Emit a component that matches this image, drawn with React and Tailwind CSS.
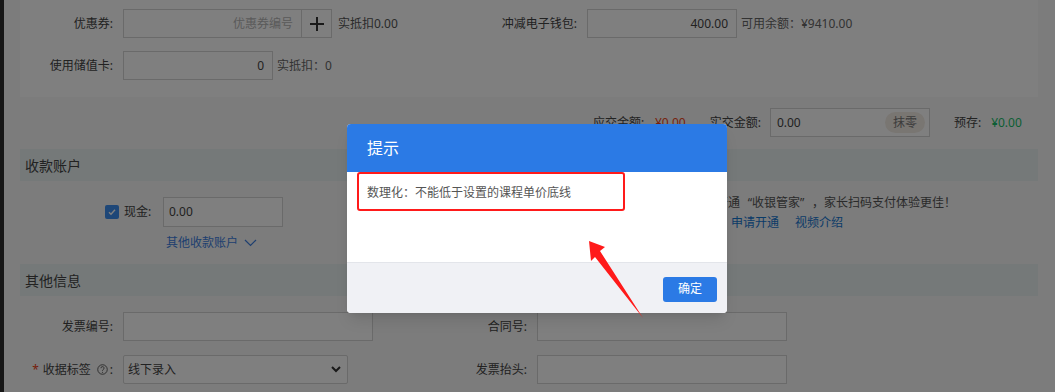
import React from "react";

function Label({ children, className = "" }) {
  return (
    <span className={`shrink-0 text-right text-[12px] text-[#444] ${className}`}>
      {children}
    </span>
  );
}

function Box({ className = "", children }) {
  return (
    <div
      className={`flex h-[29px] items-center border border-[#d4d4d4] bg-white px-[8px] text-[12px] text-[#444] ${className}`}
    >
      {children}
    </div>
  );
}

export default function App() {
  return (
    <div className="relative h-[392px] w-[1055px] overflow-hidden bg-[#f8f8f8] font-[Noto_Sans,Noto_Sans_CJK_SC,sans-serif]">
      <div className="flex h-full">
        <div className="w-[4px] shrink-0 bg-[#2c2c2c]" />
        <div className="flex-1 pl-[16px] pr-[17px]">
          {/* top panel */}
          <div className="h-[97px] bg-white pt-[9px]">
            <div className="flex h-[29px] items-center">
              <div className="flex w-[440px] items-center">
                <Label className="w-[93px]">优惠券:</Label>
                <Box className="ml-[10px] w-[179px] justify-end text-[#b5b5b5]">优惠券编号</Box>
                <div className="flex h-[29px] w-[30px] items-center justify-center border border-l-0 border-[#d4d4d4]">
                  <svg width="16" height="16" viewBox="0 0 16 16">
                    <path d="M8 1v14M1 8h14" stroke="#333" strokeWidth="2" />
                  </svg>
                </div>
                <span className="ml-[6px] text-[12px] text-[#555]">实抵扣0.00</span>
              </div>
              <Label className="w-[117px]">冲减电子钱包:</Label>
              <Box className="ml-[10px] w-[150px] justify-end">400.00</Box>
              <span className="ml-[4px] text-[12px] text-[#666]">可用余额：¥9410.00</span>
            </div>
            <div className="mt-[13px] flex h-[29px] items-center">
              <Label className="w-[93px]">使用储值卡:</Label>
              <Box className="ml-[10px] w-[150px] justify-end">0</Box>
              <span className="ml-[4px] text-[12px] text-[#666]">实抵扣：0</span>
            </div>
          </div>

          {/* totals */}
          <div className="mt-[11px] flex h-[29px] items-center pl-[573px] text-[12px] text-[#444]">
            <span className="w-[62px]">应交金额:</span>
            <span className="text-[#ed3f14]">¥0.00</span>
            <span className="ml-[24px]">实交金额:</span>
            <div className="ml-[9px] flex h-[29px] w-[160px] items-center justify-between border border-[#d4d4d4] bg-white pl-[6px] pr-[4px]">
              <span>0.00</span>
              <span className="flex h-[21px] w-[40px] items-center justify-center rounded-full bg-[#f3ece4] text-[#777]">
                抹零
              </span>
            </div>
            <span className="ml-[24px]">预存:</span>
            <span className="ml-[10px] text-[#19be6b]">¥0.00</span>
          </div>

          {/* 收款账户 */}
          <div className="mt-[12px] flex h-[32px] items-center bg-[#eaf3f3] pl-[5px] text-[14px] text-[#444]">
            收款账户
          </div>
          <div className="flex pt-[16px]">
            <div className="w-[660px] pl-[85px]">
              <div className="flex h-[30px] items-center">
                <span className="flex h-[14px] w-[14px] items-center justify-center rounded-[2px] bg-[#3d8ef0]">
                  <svg width="10" height="10" viewBox="0 0 10 10">
                    <path d="M2 5.2l2 2 4-4.4" fill="none" stroke="#fff" strokeWidth="1.4" />
                  </svg>
                </span>
                <span className="ml-[5px] w-[39px] text-[12px] text-[#444]">现金:</span>
                <div className="flex h-[30px] w-[120px] items-center border border-[#d4d4d4] bg-white pl-[5px] text-[12px] text-[#444]">
                  0.00
                </div>
              </div>
              <div className="mt-[7px] flex items-center pl-[61px] text-[12px] text-[#3d7fe0]">
                其他收款账户
                <svg className="ml-[6px]" width="13" height="8" viewBox="0 0 13 8">
                  <path d="M1 1l5.5 5.5L12 1" fill="none" stroke="#3d7fe0" strokeWidth="1.2" />
                </svg>
              </div>
            </div>
            <div className="text-[12px] leading-[20px] text-[#555]">
              <div className="-mt-[4px] flex">
                <span>您还未开通</span>
                <span className="inline-block w-[12px] text-right">“</span>
                <span>收银管家</span>
                <span className="inline-block w-[12px]">”</span>
                <span className="inline-block w-[12px]">，</span>
                <span>家长扫码支付体验更佳！</span>
              </div>
              <div className="flex">
                <span className="inline-block w-[51px]">请点击</span>
                <span className="text-[#1577d1]">申请开通</span>
                <span className="ml-[16px] text-[#1577d1]">视频介绍</span>
              </div>
            </div>
          </div>

          {/* 其他信息 */}
          <div className="mt-[12px] flex h-[32px] items-center bg-[#eaf3f3] pl-[5px] text-[14px] text-[#444]">
            其他信息
          </div>
          <div className="mt-[16px] flex h-[29px] items-center">
            <Label className="w-[93px]">发票编号:</Label>
            <Box className="ml-[10px] w-[250px]" />
            <Label className="w-[154px]">合同号:</Label>
            <Box className="ml-[10px] w-[250px]" />
          </div>
          <div className="mt-[14px] flex h-[29px] items-center">
            <Label className="flex w-[93px] items-center justify-end">
              <span className="mr-[4px] text-[#ed3f14]">*</span>
              收据标签
              <svg className="ml-[6px]" width="11" height="11" viewBox="0 0 12 12">
                <circle cx="6" cy="6" r="5.2" fill="none" stroke="#555" strokeWidth="1" />
                <path d="M4.3 4.6a1.7 1.7 0 1 1 2.4 1.5c-.5.3-.7.6-.7 1.2" fill="none" stroke="#555" strokeWidth="1" />
                <circle cx="6" cy="9" r=".6" fill="#555" />
              </svg>
              <span className="ml-[2px]">:</span>
            </Label>
            <div className="ml-[10px] flex h-[29px] w-[225px] items-center justify-between rounded-[2px] border border-[#d4d4d4] bg-white pl-[4px] pr-[6px] text-[12px] text-[#444]">
              线下录入
              <svg width="10" height="7" viewBox="0 0 10 7">
                <path d="M1 1l4 4 4-4" fill="none" stroke="#333" strokeWidth="2" />
              </svg>
            </div>
            <Label className="w-[179px]">发票抬头:</Label>
            <Box className="ml-[10px] w-[250px]" />
          </div>
        </div>
      </div>

      {/* mask */}
      <div className="absolute inset-0 bg-black/50" />

      {/* dialog */}
      <div className="absolute left-[347px] top-[124px] w-[380px] overflow-hidden rounded-[4px] bg-white shadow-lg">
        <div className="flex h-[48px] items-center bg-[#2b7ae5] pl-[20px] text-[16px] text-white">提示</div>
        <div className="relative h-[90px] bg-white pl-[20px] pt-[12px] text-[12px] leading-[18px] text-[#555]">
          数理化：不能低于设置的课程单价底线
          <div className="absolute left-[10px] top-0 h-[39px] w-[268px] rounded-[3px] border-2 border-[#ff1a1a]" />
        </div>
        <div className="flex h-[51px] items-center justify-end border-t border-[#e3e5ea] bg-[#f0f1f5] pr-[10px] pt-[2px]">
          <button className="h-[25px] w-[54px] rounded-[3px] bg-[#2b7ae5] text-[12px] text-white">确定</button>
        </div>
      </div>

      {/* annotation arrow */}
      <svg className="pointer-events-none absolute left-0 top-0" width="1055" height="392">
        <polygon points="589,241 605,247 600,251 643,318 595,257 591,261" fill="#ff1a1a" />
      </svg>
    </div>
  );
}
